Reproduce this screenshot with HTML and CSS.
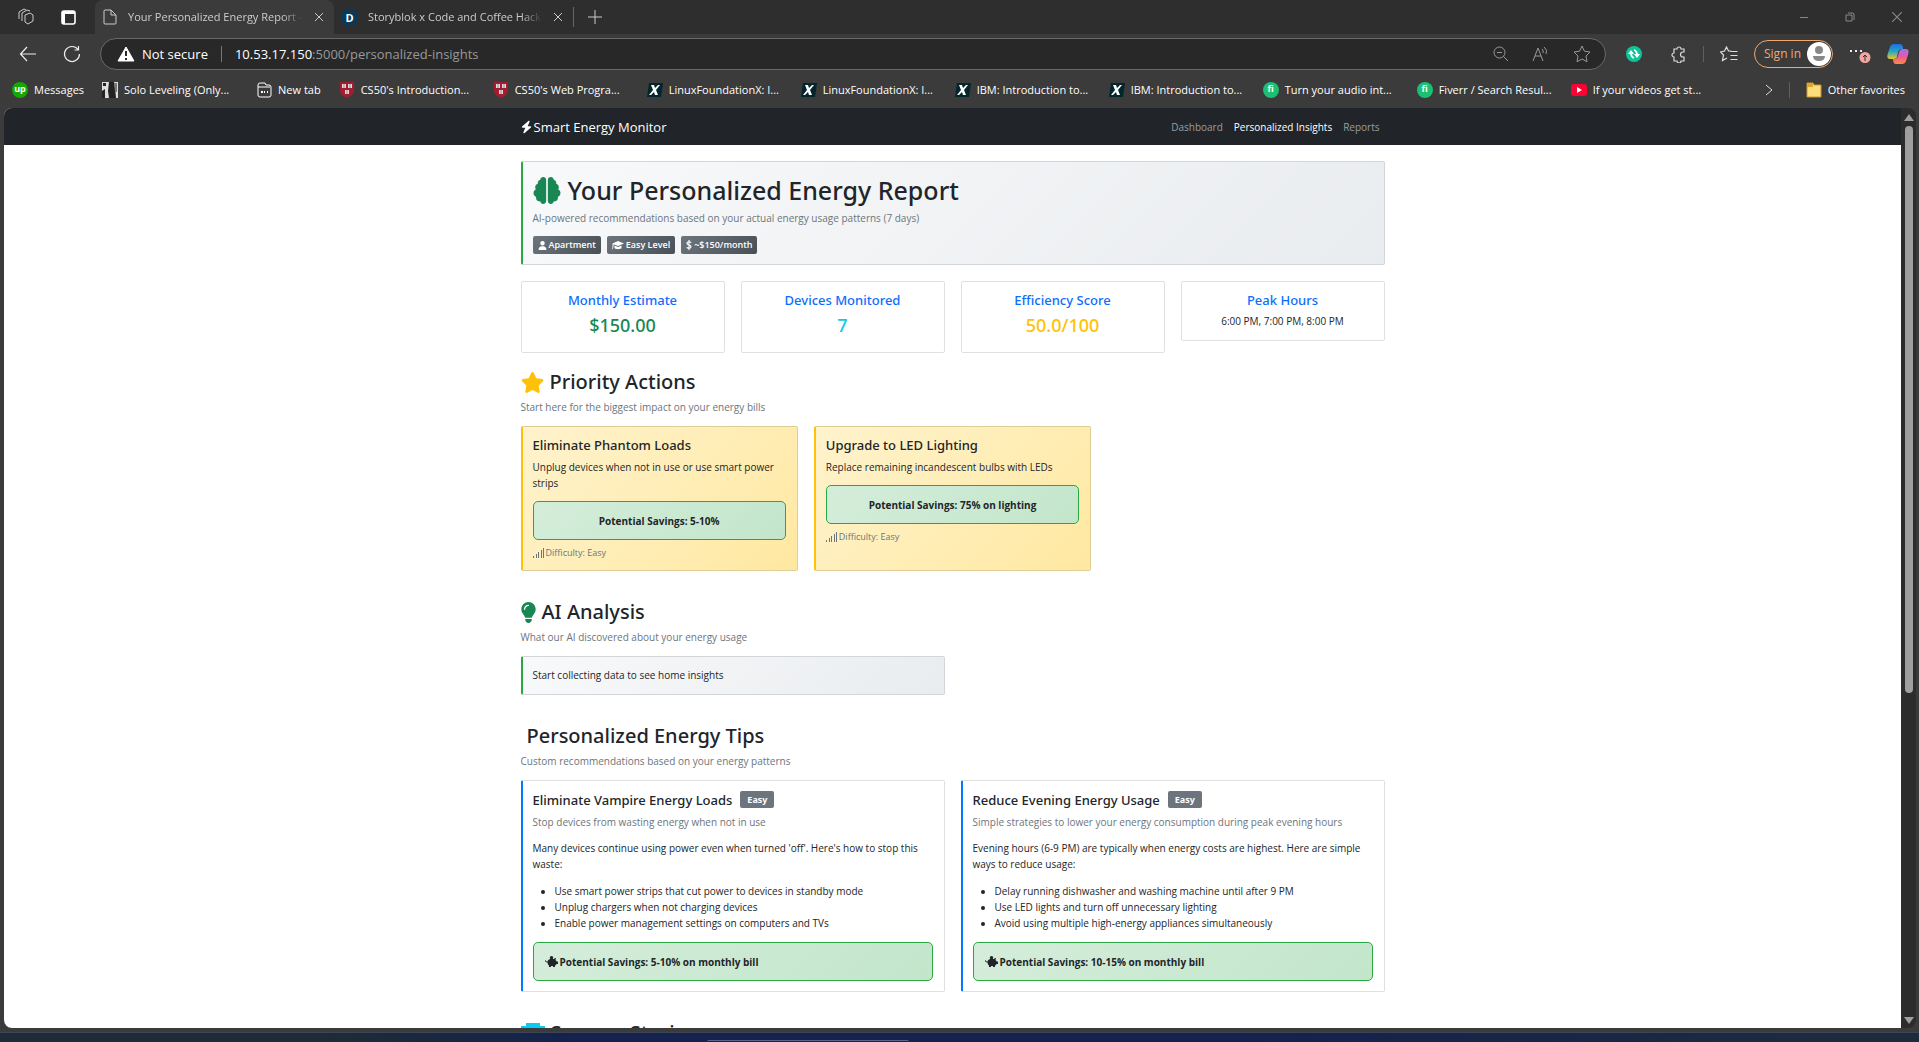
FILE: index.html
```
<!DOCTYPE html>
<html lang="en">
<head>
  <meta charset="UTF-8">
  <meta name="viewport" content="width=device-width, initial-scale=1.0">
  <title>Your Personalized Energy Report</title>
  <link rel="stylesheet" href="styles.css">
</head>
<body>
  <!-- Shared icons -->
  <svg class="sprite" aria-hidden="true">
    <symbol id="i-close" viewBox="0 0 10 10"><path d="M1 1l8 8M9 1l-8 8" fill="none" stroke="currentColor"/></symbol>
    <symbol id="i-shield" viewBox="0 0 16 16"><path d="M1 0h14v8c0 4-3 6-7 8-4-2-7-4-7-8z" fill="#a51c30"/><path d="M3 2h4v4H3zM9 2h4v4H9zM6 8h4v4H6z" fill="#ddd"/><path d="M5 2v4M11 2v4M8 8v4" stroke="#988" stroke-width="1"/></symbol>
    <symbol id="i-edx" viewBox="0 0 16 16"><path d="M2 1h14l-2 14H0z" fill="#02262b"/><path d="M4 3h3l1 3 3-3h2L9 8l2 5H8L7 10l-3 3H2l4-5z" fill="#fff"/></symbol>
    <symbol id="i-signal" viewBox="0 0 12 10"><path d="M0 8h1v2H0zM3 6h1v4H3zM5 4h1v6H5zM8 2h1v8H8zM10 0h1v10h-1z" fill="currentColor"/></symbol>
    <symbol id="i-piggy" viewBox="0 0 26 22"><circle cx="13" cy="3.500" r="3.500" fill="currentColor"/><path d="M1 8q0 3 4 3c1-4 4-5 9-5h4q1-2 4-2l-1 4q2 1 2 3h3v5h-3q-1 2-3 3v3h-4v-2h-4v2H8v-3q-3-2-3-6Q0 13 0 8z" fill="currentColor"/></symbol>
  </svg>

  <!-- Browser -->
  <header class="browser">
    <div class="tabs">
      <button class="tab-tool" aria-label="Workspaces"><svg width="18" height="18" viewBox="0 0 18 18" fill="none" stroke="#ccc"><path d="M8 7l5-2 3 2v6l-5 3-3-2zM5 13V5l5-3 3 1M2 11V4l5-3 2 1"/></svg></button>
      <button class="tab-tool" aria-label="Vertical tabs"><svg width="15" height="15" viewBox="0 0 15 15"><rect x="1" y="1" width="13" height="13" rx="2" fill="none" stroke="#fff" stroke-width="1.600"/><path d="M1 1h13v3H4v10H1z" fill="#fff"/></svg></button>
      <div class="tab active">
        <svg width="14" height="16" viewBox="0 0 14 16" fill="none" stroke="#ccc"><path d="M1 2q0-1 1-1h6l5 5v8q0 1-1 1H2q-1 0-1-1zM8 1v5h5"/></svg>
        <span class="tab-title">Your Personalized Energy Report -</span>
        <button aria-label="Close tab"><svg width="10" height="10"><use href="#i-close"/></svg></button>
      </div>
      <div class="tab">
        <span class="favicon-d">D</span>
        <span class="tab-title">Storyblok x Code and Coffee Hack</span>
        <button aria-label="Close tab"><svg width="10" height="10"><use href="#i-close"/></svg></button>
      </div>
      <button class="new-tab" aria-label="New tab"><svg width="14" height="14" viewBox="0 0 14 14"><path d="M7 0v14M0 7h14" stroke="#ccc"/></svg></button>
      <div class="window-controls">
        <button aria-label="Minimize"><svg width="10" height="10"><path d="M1 5.500h8" stroke="#888"/></svg></button>
        <button aria-label="Restore"><svg width="10" height="10" viewBox="0 0 10 10" fill="none" stroke="#888"><path d="M1 3h6v6H1zM3 1h5l1 1v6"/></svg></button>
        <button aria-label="Close"><svg width="12" height="12" viewBox="0 0 10 10" color="#888"><use href="#i-close"/></svg></button>
      </div>
    </div>

    <div class="toolbar">
      <button class="nav-btn" aria-label="Back"><svg width="18" height="16" viewBox="0 0 18 16" fill="none" stroke="#eee" stroke-width="1.200"><path d="M17 8H2M8 1L1.500 8 8 15"/></svg></button>
      <button class="nav-btn" aria-label="Refresh"><svg width="18" height="18" viewBox="0 0 18 18" fill="none" stroke="#eee" stroke-width="1.200"><path d="M15 4.500A7.500 7.500 0 1 0 16.500 9M15.500 1v4h-4"/></svg></button>
      <div class="address">
        <svg width="18" height="16" viewBox="0 0 18 16"><path d="M9 1l8 14H1z" fill="#fff" stroke="#fff" stroke-linejoin="round"/><path d="M9 5v5M9 12v2" stroke="#282828" stroke-width="2"/></svg>
        <span class="insecure">Not secure</span>
        <span class="host">10.53.17.150<span class="path">:5000/personalized-insights</span></span>
        <div class="address-tools">
          <button aria-label="Zoom"><svg width="16" height="16" viewBox="0 0 16 16" fill="none" stroke="#999"><circle cx="6.500" cy="6.500" r="5.500"/><path d="M4 6.500h5M10.500 10.500L15 15"/></svg></button>
          <button aria-label="Read aloud"><svg width="18" height="16" viewBox="0 0 18 16" fill="none" stroke="#999"><path d="M1 15L6 2l5 13M3 10h6M10 3q2 2 1 4M12 1q4 3 2 7"/></svg></button>
          <button aria-label="Add to favorites"><svg width="18" height="18" viewBox="0 0 18 18" fill="none" stroke="#999"><path d="M9 1l2.400 5.200 5.600.8-4 4 1 5.700L9 14l-5 2.700 1-5.700-4-4 5.600-.8z"/></svg></button>
        </div>
      </div>
      <div class="extensions">
        <button aria-label="Sync extension"><svg width="16" height="16" viewBox="0 0 16 16"><circle cx="8" cy="8" r="8" fill="#10c49a"/><path d="M8 12q-3-1-3-5M8 4q3 1 3 5" fill="none" stroke="#fff" stroke-width="1.800"/><path d="M2 8l3-4 3 4zM14 8l-3 4-3-4z" fill="#fff"/></svg></button>
        <button aria-label="Extensions"><svg width="17" height="17" viewBox="0 0 17 17" fill="none" stroke="#ddd" stroke-width="1.200"><path d="M4 3h3a2 2 0 0 1 4 0h3v3h-1a2 2 0 0 0 0 5h1v4h-3a2 2 0 0 1-4 0H4v-4a2 2 0 0 1 0-4z"/></svg></button>
        <i class="divider"></i>
        <button aria-label="Favorites"><svg width="18" height="16" viewBox="0 0 18 16" fill="none" stroke="#ddd" stroke-width="1.200"><path d="M11 5H8.500L6.500 1l-2 4-4 1 3 3-1 5.500L7 12M10.500 5.500h7M10.500 9.500h7M10.500 13.500h7"/></svg></button>
        <button class="sign-in">Sign in <svg width="24" height="24" viewBox="0 0 24 24"><circle cx="12" cy="12" r="12" fill="#fff"/><circle cx="12" cy="8" r="4" fill="#888"/><path d="M6 14h12q0 5-6 5t-6-5z" fill="#888"/></svg></button>
        <button aria-label="Settings"><svg width="22" height="22" viewBox="0 0 22 22"><path d="M1 8h2M6 8h2M11 8h2" stroke="#eee" stroke-width="2"/><circle cx="16" cy="14.500" r="5.500" fill="#f3a6a0"/><path d="M16 18v-6M14 14l2-2 2 2" fill="none" stroke="#333"/></svg></button>
        <button aria-label="Copilot"><svg width="22" height="22" viewBox="0 0 22 22">
          <defs>
            <linearGradient id="cp1" x1="0" y1="0" x2="0" y2="1"><stop offset="0" stop-color="#1b6fe0"/><stop offset=".5" stop-color="#28a7c5"/><stop offset="1" stop-color="#f2c522"/></linearGradient>
            <linearGradient id="cp2" x1="0" y1="0" x2="0" y2="1"><stop offset="0" stop-color="#a56bf0"/><stop offset=".5" stop-color="#e85a9e"/><stop offset="1" stop-color="#ff8a3a"/></linearGradient>
          </defs>
          <path d="M7 1h6q3 0 3 5h-2q-2 0-3 3l-1 5q-1 2-3 2H3q-4 0-2-6l2-6q1-3 4-3z" fill="url(#cp1)"/><path d="M15 21H9q-3 0-3-5h2q2 0 3-3l1-4q1-3 3-3h4q4 0 2 6l-2 6q-1 3-4 3z" fill="url(#cp2)"/></svg></button>
      </div>
    </div>

    <nav class="bookmarks">
      <a href="#" class="short"><span class="dot up">up</span>Messages</a>
      <a href="#"><svg width="16" height="16" viewBox="0 0 16 16"><path d="M0 0h16v16H0z" fill="#ddd"/><path d="M7 0h5l1 6 1 10H7L6 9zM1 1h3v3H1zM0 9l3-2v9H0z" fill="#222"/><path d="M12 1h3v9h-2z" fill="#777"/></svg>Solo Leveling (Only...</a>
      <a href="#" class="short"><svg width="16" height="16" viewBox="0 0 16 16" fill="none" stroke="#fff"><path d="M2 3q0-2 2-2h5l1 2h3q2 0 2 2v8q0 2-2 2H4q-2 0-2-2zM2 5h12"/><path d="M5 10h2M8 10h1M11 10h1" stroke-width="2"/></svg>New tab</a>
      <a href="#"><svg width="16" height="16"><use href="#i-shield"/></svg>CS50's Introduction...</a>
      <a href="#"><svg width="16" height="16"><use href="#i-shield"/></svg>CS50's Web Progra...</a>
      <a href="#"><svg width="16" height="16"><use href="#i-edx"/></svg>LinuxFoundationX: I...</a>
      <a href="#"><svg width="16" height="16"><use href="#i-edx"/></svg>LinuxFoundationX: I...</a>
      <a href="#"><svg width="16" height="16"><use href="#i-edx"/></svg>IBM: Introduction to...</a>
      <a href="#"><svg width="16" height="16"><use href="#i-edx"/></svg>IBM: Introduction to...</a>
      <a href="#"><span class="dot fi">fi</span>Turn your audio int...</a>
      <a href="#"><span class="dot fi">fi</span>Fiverr / Search Resul...</a>
      <a href="#"><svg width="16" height="16" viewBox="0 0 16 16"><rect y="2" width="16" height="12" rx="3" fill="#ff0033"/><path d="M6 5l5 3-5 3z" fill="#fff"/></svg>If your videos get st...</a>
      <div class="bookmarks-end">
        <button aria-label="More bookmarks"><svg width="8" height="12" viewBox="0 0 8 12"><path d="M1 1l6 5-6 5" fill="none" stroke="#ddd"/></svg></button>
        <i class="divider"></i>
        <a href="#" class="folder"><svg width="16" height="16" viewBox="0 0 16 16"><path d="M1 1h6l1 2h7v12H1z" fill="#ffdc7a" stroke="#c9952c"/><path d="M1 1h6v4H1z" fill="#d9a832"/></svg>Other favorites</a>
      </div>
    </nav>
  </header>

  <!-- Page -->
  <div class="view">
    <div class="page">
      <nav class="navbar">
        <div class="container">
          <a href="#" class="brand"><svg width="11" height="14" viewBox="0 0 448 512"><path fill="#fff" d="M349.400 44.600c5.900-13.700 1.500-29.700-10.600-38.500s-28.600-8-39.900 1.800l-256 224c-10 8.800-13.600 22.900-8.900 35.300S50.700 288 64 288H175.500L98.600 467.400c-5.900 13.700-1.500 29.700 10.600 38.500s28.600 8 39.900-1.800l256-224c10-8.800 13.600-22.900 8.900-35.300s-16.600-20.700-30-20.700H272.500L349.400 44.600z"/></svg>Smart Energy Monitor</a>
          <div class="nav-links">
            <a href="#">Dashboard</a>
            <a href="#" class="current">Personalized Insights</a>
            <a href="#">Reports</a>
          </div>
        </div>
      </nav>

      <main class="container">
        <section class="card hero">
          <h1><svg width="28" height="27" viewBox="0 0 512 512"><path fill="#198754" d="M184 0c30.900 0 56 25.100 56 56V456c0 30.900-25.100 56-56 56c-28.900 0-52.700-21.900-55.700-50.100c-5.200 1.400-10.700 2.100-16.300 2.100c-35.300 0-64-28.700-64-64c0-7.400 1.300-14.600 3.600-21.200C21.400 367.400 0 338.200 0 304c0-31.900 18.700-59.500 45.800-72.300C37.100 220.800 32 207 32 192c0-30.700 21.600-56.300 50.400-62.600C80.800 123.900 80 118 80 112c0-29.900 20.600-55.100 48.300-62.100C131.300 21.900 155.100 0 184 0zM328 0c28.900 0 52.600 21.900 55.700 49.900c27.800 7 48.300 32.100 48.300 62.100c0 6-.8 11.900-2.400 17.400c28.800 6.200 50.400 31.900 50.400 62.600c0 15-5.100 28.800-13.800 39.700C493.300 244.500 512 272.100 512 304c0 34.200-21.400 63.400-51.600 74.800c2.300 6.600 3.600 13.800 3.600 21.200c0 35.300-28.700 64-64 64c-5.600 0-11.100-.7-16.300-2.100c-3 28.200-26.800 50.100-55.700 50.100c-30.900 0-56-25.100-56-56V56c0-30.900 25.100-56 56-56z"/></svg>Your Personalized Energy Report</h1>
          <p class="muted">AI-powered recommendations based on your actual energy usage patterns (7 days)</p>
          <div class="badges">
            <span class="badge"><svg width="9" height="9" viewBox="0 0 448 512"><path fill="#fff" d="M224 256A128 128 0 1 0 224 0a128 128 0 1 0 0 256zm-45.700 48C79.800 304 0 383.800 0 482.300C0 498.700 13.300 512 29.700 512H418.300c16.400 0 29.700-13.300 29.700-29.700C448 383.800 368.200 304 269.700 304H178.300z"/></svg>Apartment</span>
            <span class="badge"><svg width="12" height="9" viewBox="0 0 24 18"><path fill="#fff" d="M12 0l12 5-12 5-9-3.500V10c0 3-1 5-2 7H0c1-3 1-5 1-7V5zM5 9l7 3 7-3v5c0 3-14 3-14 0z"/></svg>Easy Level</span>
            <span class="badge"><svg width="6" height="10" viewBox="0 0 12 20"><path fill="none" stroke="#fff" stroke-width="2.400" d="M6 0v20M10.500 5.500Q9 3.500 6 3.500 2 3.500 2 6.500T6 10t4 3.500-4 3-4.500-2"/></svg>~$150/month</span>
          </div>
        </section>

        <section class="stats">
          <div class="card stat"><h5>Monthly Estimate</h5><h3 class="green">$150.00</h3></div>
          <div class="card stat"><h5>Devices Monitored</h5><h3 class="cyan">7</h3></div>
          <div class="card stat"><h5>Efficiency Score</h5><h3 class="yellow">50.0/100</h3></div>
          <div class="card stat"><h5>Peak Hours</h5><p>6:00 PM, 7:00 PM, 8:00 PM</p></div>
        </section>

        <section class="block">
          <h2><svg width="23" height="21" viewBox="16 0 544 512"><path fill="#ffc107" d="M316.900 18C311.600 7 300.400 0 288.100 0s-23.400 7-28.800 18L195 150.300 51.400 171.500c-12 1.800-22 10.200-25.700 21.700s-.7 24.200 7.900 32.700L137.800 329 113.200 474.700c-2 12 3 24.200 12.900 31.300s23 8 33.800 2.300l128.300-68.500 128.300 68.500c10.800 5.700 23.900 4.900 33.800-2.300s14.900-19.300 12.900-31.300L438.500 329 542.700 225.900c8.600-8.500 11.700-21.200 7.900-32.700s-13.700-19.900-25.700-21.700L381.200 150.300 316.900 18z"/></svg>Priority Actions</h2>
          <p class="muted">Start here for the biggest impact on your energy bills</p>
          <div class="grid three">
            <div class="card action">
              <h5>Eliminate Phantom Loads</h5>
              <p>Unplug devices when not in use or use smart power strips</p>
              <div class="savings centered">Potential Savings: 5-10%</div>
              <small><svg width="12" height="10"><use href="#i-signal"/></svg>Difficulty: Easy</small>
            </div>
            <div class="card action">
              <h5>Upgrade to LED Lighting</h5>
              <p>Replace remaining incandescent bulbs with LEDs</p>
              <div class="savings centered">Potential Savings: 75% on lighting</div>
              <small><svg width="12" height="10"><use href="#i-signal"/></svg>Difficulty: Easy</small>
            </div>
          </div>
        </section>

        <section class="block">
          <h2><svg width="15" height="21" viewBox="8 0 368 512"><path fill="#198754" d="M272 384c9.600-31.900 29.500-59.100 49.200-86.200l0 0c5.200-7.100 10.400-14.200 15.400-21.400c19.800-28.500 31.400-63 31.400-100.300C368 78.800 289.200 0 192 0S16 78.800 16 176c0 37.300 11.600 71.900 31.400 100.300c5 7.200 10.200 14.300 15.400 21.400l0 0c19.800 27.100 39.700 54.400 49.200 86.200H272zM192 512c44.200 0 80-35.800 80-80V416H112v16c0 44.200 35.800 80 80 80zM112 176c0 8.800-7.200 16-16 16s-16-7.200-16-16c0-61.900 50.100-112 112-112c8.800 0 16 7.200 16 16s-7.200 16-16 16c-44.200 0-80 35.800-80 80z"/></svg>AI Analysis</h2>
          <p class="muted">What our AI discovered about your energy usage</p>
          <div class="grid two">
            <div class="card insight"><p>Start collecting data to see home insights</p></div>
          </div>
        </section>

        <section class="block">
          <h2><span></span>Personalized Energy Tips</h2>
          <p class="muted">Custom recommendations based on your energy patterns</p>
          <div class="grid two">
            <div class="card tip">
              <h5>Eliminate Vampire Energy Loads <span class="level">Easy</span></h5>
              <p class="muted">Stop devices from wasting energy when not in use</p>
              <p>Many devices continue using power even when turned 'off'. Here's how to stop this waste:</p>
              <ul>
                <li>Use smart power strips that cut power to devices in standby mode</li>
                <li>Unplug chargers when not charging devices</li>
                <li>Enable power management settings on computers and TVs</li>
              </ul>
              <div class="savings"><svg width="13" height="11"><use href="#i-piggy"/></svg>Potential Savings: 5-10% on monthly bill</div>
            </div>
            <div class="card tip">
              <h5>Reduce Evening Energy Usage <span class="level">Easy</span></h5>
              <p class="muted">Simple strategies to lower your energy consumption during peak evening hours</p>
              <p>Evening hours (6-9 PM) are typically when energy costs are highest. Here are simple ways to reduce usage:</p>
              <ul>
                <li>Delay running dishwasher and washing machine until after 9 PM</li>
                <li>Use LED lights and turn off unnecessary lighting</li>
                <li>Avoid using multiple high-energy appliances simultaneously</li>
              </ul>
              <div class="savings"><svg width="13" height="11"><use href="#i-piggy"/></svg>Potential Savings: 10-15% on monthly bill</div>
            </div>
          </div>
        </section>

        <section class="block">
          <h2><svg width="24" height="21" viewBox="0 0 24 21"><path fill="#0dcaf0" d="M5 0h14v3h5v3q-1 6-8 7l-2 2v3h4v3H6v-3h4v-3l-2-2Q1 12 0 6V3h5zM2 5q0 4 4 6L5 5zM22 5h-3l-1 6q4-2 4-6z"/></svg>Success Stories</h2>
        </section>
      </main>
    </div>
    <div class="scrollbar">
      <i class="arrow up-arrow"></i>
      <i class="track"><i class="thumb"></i></i>
      <i class="arrow down-arrow"></i>
    </div>
  </div>

  <footer class="taskbar"><i class="search"></i></footer>
</body>
</html>
```
FILE: styles.css
```
* {
  box-sizing: border-box;
}

body {
  margin: 0;
  height: 100vh;
  display: flex;
  flex-direction: column;
  overflow: hidden;
  background: #3b3b3b;
  color: #212529;
  font-family: "Open Sans", "Noto Sans", sans-serif;
  font-size: 10px;
  line-height: 16px;
}

h1, h2, h3, h5, p, ul {
  margin: 0;
}

h1, h2, h3, h5 {
  font-family: "Noto Sans", "Open Sans", sans-serif;
  font-weight: 500;
}

a {
  color: inherit;
  text-decoration: none;
}

button {
  display: flex;
  align-items: center;
  padding: 0;
  border: 0;
  background: none;
  color: inherit;
  font: inherit;
}

svg {
  flex: none;
  display: block;
}

.sprite {
  position: absolute;
  width: 0;
  height: 0;
}

/* Browser */
.browser {
  flex: none;
  color: #fff;
  font-size: 12px;
}

.tabs {
  display: flex;
  align-items: center;
  height: 34px;
  background: #2e2e2e;
  font-size: 11px;
}

.tab-tool {
  width: 32px;
  justify-content: center;
}

.tab-tool:first-child {
  width: 52px;
}

.tab {
  display: flex;
  align-items: center;
  gap: 11px;
  width: 239px;
  height: 34px;
  padding: 0 10px 0 8px;
  color: #ccc;
}

.tab.active {
  margin-left: 11px;
  background: #3b3b3b;
  border-radius: 8px 8px 0 0;
}

.tab-title {
  flex: 1;
  overflow: hidden;
  white-space: nowrap;
  -webkit-mask-image: linear-gradient(to right, #000 88%, transparent);
  mask-image: linear-gradient(to right, #000 88%, transparent);
}

.favicon-d {
  width: 15px;
  height: 15px;
  border-radius: 5px;
  background: #06395a;
  color: #fff;
  font-weight: 700;
  line-height: 15px;
  text-align: center;
}

.new-tab {
  height: 20px;
  padding-left: 14px;
  border-left: 1px solid #666;
}

.window-controls {
  display: flex;
  gap: 36px;
  margin-left: auto;
  padding-right: 16px;
}

.toolbar {
  display: flex;
  align-items: center;
  height: 40px;
  padding: 0 10px 0 19px;
}

.nav-btn {
  width: 44px;
}

.nav-btn + .nav-btn {
  width: 37px;
}

.address {
  flex: 1;
  display: flex;
  align-items: center;
  height: 32px;
  padding: 0 14px 0 16px;
  border: 1px solid #6a6a6a;
  border-radius: 16px;
  background: #282828;
  font-size: 13px;
}

.insecure {
  margin-left: 7px;
  padding-right: 13px;
  border-right: 1px solid #777;
}

.host {
  margin-left: 13px;
}

.path {
  color: #999;
}

.address-tools {
  display: flex;
  align-items: center;
  gap: 23px;
  margin-left: auto;
}

.extensions {
  display: flex;
  align-items: center;
  gap: 16px;
  padding-left: 20px;
}

.extensions button:nth-child(2) {
  margin-left: 12px;
}

.divider {
  width: 1px;
  height: 16px;
  background: #5f5f5f;
}

.sign-in {
  height: 28px;
  gap: 6px;
  padding: 0 1px 0 9px;
  border: 1px solid #f2a76b;
  border-radius: 14px;
  color: #f2a76b;
}

.bookmarks {
  display: flex;
  align-items: center;
  height: 34px;
  padding: 0 0 2px 12px;
  font-size: 11px;
}

.bookmarks a {
  flex: none;
  display: flex;
  align-items: center;
  gap: 6px;
  width: 154px;
  white-space: nowrap;
}

.bookmarks .short {
  width: auto;
  padding-right: 18px;
}

.dot {
  width: 16px;
  height: 16px;
  border-radius: 50%;
  font-size: 9px;
  font-weight: 700;
  line-height: 14px;
  text-align: center;
}

.up {
  background: #14a800;
}

.fi {
  background: #1dbf73;
}

.bookmarks-end {
  display: flex;
  align-items: center;
  gap: 16px;
  margin-left: auto;
  padding-right: 14px;
}

.bookmarks .folder {
  width: auto;
}

/* Page */
.view {
  flex: 1;
  display: flex;
  min-height: 0;
  margin: 0 3px 4px 4px;
  overflow: hidden;
  border-radius: 8px;
  background: #2c2c2c;
}

.page {
  flex: 1;
  overflow: hidden;
  background: #fff;
}

.container {
  max-width: 864px;
  margin: 0 auto;
}

.navbar {
  background: #212529;
  color: #fff;
}

.navbar .container {
  display: flex;
  align-items: center;
  justify-content: space-between;
  height: 37px;
}

.brand {
  display: flex;
  align-items: center;
  gap: 2px;
  font-size: 13px;
}

.nav-links {
  display: flex;
  gap: 11px;
  padding-right: 5px;
  color: #9b9d9f;
}

.nav-links .current {
  color: #fff;
}

.card {
  border: 1px solid #dee0e2;
  border-radius: 2px;
  background: #fff;
}

.muted {
  color: #6c757d;
}

h5 {
  font-size: 13px;
}

h2 {
  display: flex;
  align-items: center;
  gap: 6px;
  font-size: 20px;
  line-height: 26px;
}

.hero,
.insight {
  border-left: 2px solid #28a745;
  background: linear-gradient(135deg, #f8f9fa, #e9ecef);
  border-top-color: #d2d6da;
  border-right-color: #d2d6da;
  border-bottom-color: #d2d6da;
}

.hero {
  margin-top: 16px;
  padding: 12px 10px 10px;
}

h1 {
  display: flex;
  align-items: center;
  gap: 7px;
  font-size: 25px;
  line-height: 32px;
}

.hero .muted {
  margin-top: 4px;
}

.badges {
  display: flex;
  gap: 6px;
  margin-top: 10px;
}

.badge {
  display: flex;
  align-items: center;
  gap: 2px;
  height: 18px;
  padding: 0 5px;
  border-radius: 2px;
  background: linear-gradient(135deg, #6c757d, #495057);
  color: #fff;
  font-size: 9px;
  font-weight: 600;
}

.stats {
  display: grid;
  grid-template-columns: repeat(4, 1fr);
  gap: 16px;
  align-items: start;
  margin-top: 16px;
}

.stat {
  padding: 10px 10px 11px;
  text-align: center;
}

.stat h5 {
  color: #0d6efd;
}

.stat h3 {
  margin: 6px 0 5px;
  font-size: 18px;
  line-height: 22px;
}

.stat p {
  margin-top: 5px;
}

.green {
  color: #198754;
}

.cyan {
  color: #0dcaf0;
}

.yellow {
  color: #ffc107;
}

.block {
  margin-bottom: 28px;
}

.stats + .block {
  margin-top: 16px;
}

.block > .muted {
  margin: 4px 0 11px;
}

.grid {
  display: grid;
  gap: 16px;
}

.two {
  grid-template-columns: repeat(2, 1fr);
}

.three {
  grid-template-columns: repeat(3, 1fr);
}

.action,
.tip {
  padding: 10px 11px 10px 10px;
}

.action {
  padding-bottom: 9px;
  border-color: #decd95;
  border-left: 2px solid #ffc107;
  background: linear-gradient(135deg, #fff3cd, #ffe8a1);
}

.action p {
  margin: 6px 0 10px;
}

.savings {
  display: flex;
  align-items: center;
  gap: 2px;
  height: 39px;
  padding: 0 11px;
  border: 1px solid #28a745;
  border-radius: 5px;
  background: linear-gradient(135deg, #d4edda, #c3e6cb);
  font-weight: 700;
}

.centered {
  justify-content: center;
}

.action small {
  display: flex;
  align-items: center;
  gap: 1px;
  margin-top: 5px;
  color: #6c757d;
  font-size: 9px;
}

.insight {
  padding: 10px 10px 11px;
}

.tip {
  border-left: 2px solid #007bff;
}

.tip h5 {
  display: flex;
  align-items: center;
  gap: 8px;
}

.level {
  height: 17px;
  padding: 0 7px;
  border-radius: 2px;
  background: #6c757d;
  color: #fff;
  font-size: 9px;
  font-weight: 700;
  line-height: 18px;
}

.tip p {
  margin-top: 6px;
}

.tip .muted + p {
  margin-top: 10px;
}

.tip ul {
  margin: 11px 0;
  padding-left: 22px;
}

/* Scrollbar */
.scrollbar {
  display: flex;
  flex-direction: column;
  align-items: center;
  width: 15px;
  padding: 6px 0 4px;
}

.arrow {
  border: 5px solid transparent;
}

.up-arrow {
  border-top: 0;
  border-bottom: 7px solid #9f9f9f;
}

.down-arrow {
  border-bottom: 0;
  border-top: 7px solid #9f9f9f;
}

.track {
  flex: 1;
  padding: 5px 0;
}

.thumb {
  display: block;
  width: 8px;
  height: 64%;
  border-radius: 4px;
  background: #9f9f9f;
}

.taskbar {
  flex: none;
  display: flex;
  justify-content: center;
  align-items: flex-end;
  height: 10px;
  border-top: 1px solid #3d4654;
  background: linear-gradient(to right, #1e2b36 17%, #14224d 30%, #14224d 65%, #1e2b3d);
}

.search {
  width: 202px;
  height: 2px;
  margin-right: 304px;
  border-top: 1px solid #59658a;
  border-radius: 4px 4px 0 0;
}
```
